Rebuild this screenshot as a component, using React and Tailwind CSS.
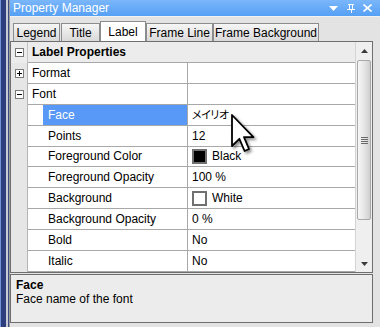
import React from "react";

const ui = "font-['Liberation_Sans',Arial,sans-serif]";

const rows = [
  { label: "Format", top: true, expander: "plus" },
  { label: "Font", top: true, expander: "minus" },
  { label: "Face", value: "メイリオ", cjk: true, selected: true },
  { label: "Points", value: "12" },
  { label: "Foreground Color", value: "Black", swatch: "bg-black" },
  { label: "Foreground Opacity", value: "100 %" },
  { label: "Background", value: "White", swatch: "bg-white" },
  { label: "Background Opacity", value: "0 %" },
  { label: "Bold", value: "No" },
  { label: "Italic", value: "No" },
];

const tabs = [
  { name: "Legend", w: "w-[47px] mr-px" },
  { name: "Title", w: "w-[39px]" },
  { name: "Label", w: "w-[46px]", active: true },
  { name: "Frame Line", w: "w-[67px]" },
  { name: "Frame Background", w: "w-[106px]" },
];

const Expander = ({ open }) => (
  <svg width="9" height="9" viewBox="0 0 9 9" shapeRendering="crispEdges">
    <rect x="0.5" y="0.5" width="8" height="8" fill="#fff" stroke="#7a7a7a" />
    <rect x="2" y="4" width="5" height="1" fill="#000" />
    {!open && <rect x="4" y="2" width="1" height="5" fill="#000" />}
  </svg>
);

const Row = ({ row }) => (
  <div className="flex h-[21px]">
    <div className="w-[17px] bg-[#e6e6e6] border-r border-[#b4b4b4] flex items-center justify-center">
      {row.expander && <Expander open={row.expander === "minus"} />}
    </div>
    <div className="flex-1 flex border-b border-[#a8a8a8] bg-white">
      {!row.top && <div className="w-[15px]" />}
      <div
        className={
          "flex items-center border-r border-[#a8a8a8] " +
          (row.top ? "w-[160px] pl-[4px] " : "w-[145px] pl-[5px] ") +
          (row.selected ? "bg-[#5898f6] text-white" : "text-black")
        }
      >
        {row.label}
      </div>
      <div className="flex-1 flex items-center pl-[4px] text-black">
        {row.swatch && (
          <div className={"w-[15px] h-[15px] border-2 border-[#707070] mr-[5px] " + row.swatch} />
        )}
        <span
          className={
            row.cjk
              ? "font-['Noto_Sans_CJK_JP',sans-serif] text-[11px] [font-feature-settings:'palt'] tracking-[-0.5px]"
              : ""
          }
        >
          {row.value}
        </span>
      </div>
    </div>
  </div>
);

const Scrollbar = () => (
  <div className="w-[17px] bg-[#efefef] border-l border-[#d4d4d4] flex flex-col items-center">
    <div className="h-[18px] flex items-center justify-center">
      <svg width="7" height="4" viewBox="0 0 7 4">
        <path d="M3.5 0 L7 4 L0 4 Z" fill="#3a3a3a" />
      </svg>
    </div>
    <div className="w-[14px] h-[160px] rounded-[2px] border border-[#a9a9a9] bg-gradient-to-r from-[#f7f7f7] via-[#e6e6e6] to-[#cfcfcf] flex flex-col items-center justify-center gap-px">
      <div className="w-[7px] h-px bg-[#6a6a6a]" />
      <div className="w-[7px] h-px bg-[#6a6a6a]" />
      <div className="w-[7px] h-px bg-[#6a6a6a]" />
      <div className="w-[7px] h-px bg-[#6a6a6a]" />
    </div>
    <div className="flex-1" />
    <div className="h-[17px] flex items-center justify-center">
      <svg width="7" height="4" viewBox="0 0 7 4">
        <path d="M0 0 L7 0 L3.5 4 Z" fill="#3a3a3a" />
      </svg>
    </div>
  </div>
);

export default function App() {
  return (
    <div className={"relative w-[380px] h-[327px] flex bg-[#e3e3e3] text-[12px] overflow-hidden " + ui}>
      {/* window frame strip */}
      <div className="flex h-full">
        <div className="w-px bg-[#6f93d6]" />
        <div className="w-[5px] bg-[#2d3e7f]" />
        <div className="w-[2px] bg-[#c9cbd4]" />
        <div className="w-px bg-[#3b4b86]" />
        <div className="w-px bg-[#9b9b9b]" />
      </div>

      <div className="flex-1 flex flex-col">
        {/* title bar */}
        <div className="h-[16px] flex items-center pl-[3px] pr-[8px] bg-gradient-to-b from-[#7ab6fa] to-[#55a0f5] text-white leading-none">
          <span>Property Manager</span>
          <div className="flex-1" />
          <svg width="9" height="5" viewBox="0 0 9 5" className="mr-[9px]">
            <path d="M0 0 L9 0 L4.5 5 Z" fill="#fff" />
          </svg>
          <svg width="8" height="9" viewBox="0 0 8 9" shapeRendering="crispEdges" className="mr-[8px]">
            <rect x="1" y="0" width="6" height="1" fill="#fff" />
            <rect x="2" y="0" width="1" height="5" fill="#fff" />
            <rect x="5" y="0" width="1" height="5" fill="#fff" />
            <rect x="0" y="5" width="8" height="1" fill="#fff" />
            <rect x="3.5" y="5" width="1" height="4" fill="#fff" />
          </svg>
          <svg width="9" height="8" viewBox="0 0 9 8">
            <path d="M0.5 0.5 L8.5 7.5 M8.5 0.5 L0.5 7.5" stroke="#fff" strokeWidth="1.6" />
          </svg>
        </div>

        {/* tabs */}
        <div className="h-[25px] flex items-end pl-[3px] border-t border-[#f2f2f2]">
          {tabs.map((t) => (
            <div
              key={t.name}
              className={
                "flex items-center justify-center border border-b-0 border-[#8c8c8c] text-black " +
                t.w +
                (t.active ? " h-[20px] bg-white" : " h-[18px] bg-gradient-to-b from-[#f6f6f6] to-[#d9d9d9]")
              }
            >
              {t.name}
            </div>
          ))}
        </div>

        {/* property grid */}
        <div className="mr-[7px] border border-[#6f6f6f] flex h-[232px]">
          <div className="flex-1 flex flex-col overflow-hidden">
            <div className="flex h-[21px] bg-[#ececec]">
              <div className="w-[17px] border-r border-[#c4c4c4] flex items-center justify-center">
                <Expander open />
              </div>
              <div className="flex-1 flex items-center pl-[4px] border-b border-[#a8a8a8] font-bold text-black">
                Label Properties
              </div>
            </div>
            {rows.map((r) => (
              <Row key={r.label} row={r} />
            ))}
          </div>
          <Scrollbar />
        </div>

        {/* description */}
        <div className="mt-px mr-[7px] h-[49px] border border-[#6f6f6f] bg-[#ececec] pl-[5px] pt-[3px] leading-[14px] text-black">
          <div className="font-bold">Face</div>
          <div>Face name of the font</div>
        </div>
      </div>

      {/* mouse pointer */}
      <svg
        width="24"
        height="40"
        viewBox="0 0 12 20"
        className="absolute left-[231px] top-[114px] drop-shadow-[2px_2px_1.5px_rgba(0,0,0,0.45)]"
      >
        <path
          d="M0.5 0.5 L0.5 16 L4.2 12.4 L6.8 18.5 L9 17.5 L6.5 11.6 L11.2 11.6 Z"
          fill="#fff"
          stroke="#000"
          strokeWidth="0.9"
          strokeLinejoin="round"
        />
      </svg>
    </div>
  );
}
